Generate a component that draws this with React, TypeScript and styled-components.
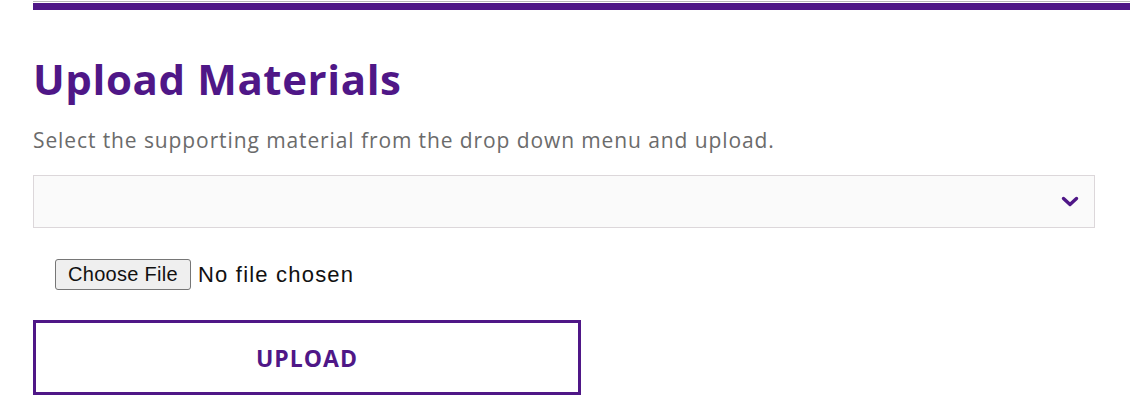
import React from 'react'
import styled, { createGlobalStyle } from 'styled-components'

const purple = '#4f1787'

const GlobalStyle = createGlobalStyle`
  body {
    margin: 0;
    background: #fff;
    font-family: "Open Sans", "Liberation Sans", sans-serif;
  }
`

const Page = styled.div`
  width: 1097px;
  padding: 1px 0 0 33px;
`

const TopRule = styled.div`
  height: 9px;
  border-top: 1px solid #b9b9b9;
  background: ${purple};
  background-clip: content-box;
  padding-top: 1px;
  box-sizing: border-box;
`

const Title = styled.h1`
  margin: 44px 0 0;
  font-family: "Open Sans", sans-serif;
  font-weight: 700;
  font-size: 42px;
  line-height: 50px;
  color: ${purple};
  letter-spacing: 0.6px;
`

const Lead = styled.p`
  margin: 23px 0 0;
  font-size: 21px;
  line-height: 26px;
  color: #6b6b6b;
  letter-spacing: 0.9px;
`

const SelectBox = styled.div`
  margin-top: 22px;
  width: 1062px;
  height: 53px;
  box-sizing: border-box;
  border: 1px solid #dcd7da;
  background: #fafafa;
  display: flex;
  align-items: center;
  justify-content: flex-end;
  padding-right: 15px;
`

const FileRow = styled.div`
  margin: 31px 0 0 22px;
  display: flex;
  align-items: center;
  gap: 7px;
  font-family: "Liberation Sans", Arial, sans-serif;
  font-size: 22px;
  letter-spacing: 1.2px;
  color: #111;
`

const ChooseButton = styled.button`
  height: 31px;
  padding: 0 12px;
  font-family: "Liberation Sans", Arial, sans-serif;
  font-size: 20px;
  letter-spacing: 0.3px;
  color: #111;
  background: #efefef;
  border: 1px solid #767676;
  border-radius: 3px;
`

const UploadButton = styled.button`
  margin-top: 30px;
  width: 548px;
  height: 75px;
  background: #fff;
  border: 3px solid ${purple};
  color: ${purple};
  font-family: "Open Sans", sans-serif;
  font-weight: 700;
  font-size: 23px;
  letter-spacing: 1px;
`

function Chevron() {
  return (
    <svg width="18" height="11" viewBox="0 0 18 11">
      <path d="M2.5 2.5 L9 8.5 L15.5 2.5" fill="none" stroke={purple} strokeWidth="3.4" strokeLinecap="round" strokeLinejoin="round" />
    </svg>
  )
}

export default function App() {
  return (
    <Page>
      <GlobalStyle />
      <TopRule />
      <Title>Upload Materials</Title>
      <Lead>Select the supporting material from the drop down menu and upload.</Lead>
      <SelectBox>
        <Chevron />
      </SelectBox>
      <FileRow>
        <ChooseButton>Choose File</ChooseButton>
        <span>No file chosen</span>
      </FileRow>
      <UploadButton>UPLOAD</UploadButton>
    </Page>
  )
}
